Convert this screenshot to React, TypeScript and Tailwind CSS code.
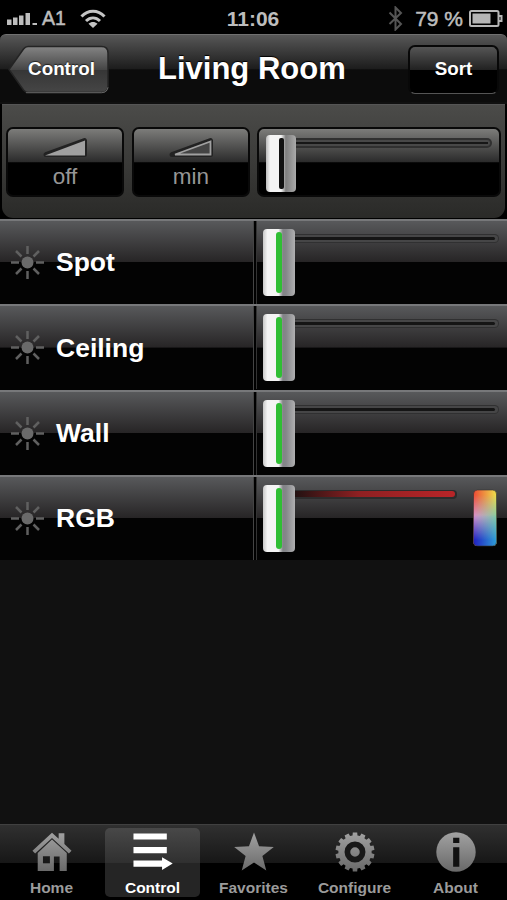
import { useState } from "react";
import clsx from "clsx";

const lights = [
    { name: "Spot", rgb: false },
    { name: "Ceiling", rgb: false },
    { name: "Wall", rgb: false },
    { name: "RGB", rgb: true },
];

// 14 teeth, each one a small trapezoid on the rim
const gearPath = () => {
    const teeth = 14;
    const step = (Math.PI * 2) / teeth;
    const points: string[] = [];
    const add = (r: number, a: number) => points.push(`${(21 + r * Math.cos(a)).toFixed(2)} ${(21 + r * Math.sin(a)).toFixed(2)}`);
    for (let i = 0; i < teeth; i++) {
        const a = i * step - Math.PI / 2;
        add(17.5, a - step * 0.33);
        add(20.6, a - step * 0.25);
        add(20.6, a + step * 0.25);
        add(17.5, a + step * 0.33);
    }
    return `M${points.join("L")}Z`;
};

function IconGradient({ id }: { id: string }) {
    return (
        <linearGradient id={id} x1="0" y1="0" x2="0" y2="42" gradientUnits="userSpaceOnUse">
            <stop offset="0" stopColor="#a2a2a2" />
            <stop offset="1" stopColor="#686868" />
        </linearGradient>
    );
}

function HomeIcon() {
    return (
        <svg width="42" height="42" viewBox="0 0 42 42">
            <defs><IconGradient id="home" /></defs>
            <path fill="url(#home)" d="M21 .8 28 7.2V1.2h6v11.5l7.5 7-2.8 3L21 6.3 3.3 22.7.5 19.7Z" />
            <path fill="url(#home)" fillRule="evenodd" d="M21 8 36.5 22v19H29V25.8h-6V41H6V22ZM11.5 25.5v7.3h7.3v-7.3Z" />
        </svg>
    );
}

function ControlIcon() {
    return (
        <svg width="42" height="42" viewBox="0 0 42 42" fill="#fff">
            <path d="M.5 1.500h35V8h-35ZM.5 15.700h35v6.500h-35ZM.5 30h30v-3.500l11.200 6.700-11.200 6.800v-3.500H.5Z" />
        </svg>
    );
}

function StarIcon() {
    return (
        <svg width="42" height="42" viewBox="0 0 42 42">
            <defs><IconGradient id="star" /></defs>
            <path fill="url(#star)" d="m21 .5 5.300 14.500 15.500.7-12 9.600 4.100 15.200L21 32 8.100 40.500l4.100-15.200-12-9.600 15.500-.7Z" />
        </svg>
    );
}

function GearIcon() {
    return (
        <svg width="42" height="42" viewBox="0 0 42 42">
            <defs><IconGradient id="gear" /></defs>
            <path fill="url(#gear)" d={gearPath()} />
            <circle cx="21" cy="21" r="8" fill="none" stroke="#181818" strokeWidth="6" />
        </svg>
    );
}

function InfoIcon() {
    return (
        <svg width="42" height="42" viewBox="0 0 42 42">
            <defs><IconGradient id="info" /></defs>
            <circle cx="21" cy="21" r="20.700" fill="url(#info)" />
            <path fill="#111" d="M18 6h6.500v5.500H18ZM18 16h6.500v20.500H18Z" />
        </svg>
    );
}

const tabs = [
    { label: "Home", icon: HomeIcon },
    { label: "Control", icon: ControlIcon },
    { label: "Favorites", icon: StarIcon },
    { label: "Configure", icon: GearIcon },
    { label: "About", icon: InfoIcon },
];

function StatusBar() {
    return (
        <div className="grid h-[34px] shrink-0 grid-cols-3 items-center bg-black pt-[3px] text-[20px] font-bold leading-none text-[#bdbdbd]">
            <div className="flex items-center pl-[7px]">
                <svg width="30" height="15" viewBox="0 0 30 15" fill="#bdbdbd">
                    <path d="M0 8.500h4.500V14H0ZM6 6.500h4.500V14H6ZM12 4.500h4.500V14H12ZM18.500 2H23v12h-4.500ZM25.500 12H30v2h-4.500Z" />
                </svg>
                <span className="ml-[5px] text-[19.500px] font-normal [-webkit-text-stroke:0.5px_#bdbdbd]">A1</span>
                <svg className="ml-[14px]" width="26" height="20" viewBox="0 0 26 20" fill="none" stroke="#c4c4c4" strokeWidth="3">
                    <path d="M1.500 7.500C8 .6 18 .6 24.500 7.500M6 12c4.300-4 9.700-4 14 0" />
                    <path fill="#c4c4c4" stroke="none" d="m13 19-4.500-4.300c2.700-2.400 6.300-2.400 9 0Z" />
                </svg>
            </div>
            <span className="-ml-px text-center text-[21px]">11:06</span>
            <div className="flex items-center justify-end pr-[4px]">
                <svg className="mr-[11px]" width="16" height="25" viewBox="0 0 16 25" fill="none" stroke="#555" strokeWidth="2">
                    <path d="M1.500 6.500 13 18l-5.500 5.500V1.500L13 7 1.500 18" />
                </svg>
                <span className="text-[21px] font-normal [-webkit-text-stroke:0.5px_#bdbdbd]">79 %</span>
                <svg className="ml-[6px]" width="34" height="17" viewBox="0 0 34 17">
                    <rect x="1" y="1" width="28.500" height="15" rx="1.500" fill="none" stroke="#b5b5b5" strokeWidth="2" />
                    <path fill="#b5b5b5" d="M3.500 3.500h18v10h-18Z" />
                    <path fill="none" stroke="#b5b5b5" strokeWidth="2" d="M30 6h2.500v5H30" />
                </svg>
            </div>
        </div>
    );
}

function Header() {
    return (
        <header className="flex h-[70px] shrink-0 items-start rounded-t-[6px] border-t border-[#707070] border-b-2 border-b-[#101010] bg-[linear-gradient(to_bottom,#575757_0%,#1d1d1d_50%,#0c0c0c_52%,#0c0c0c_100%)] pt-[10px] pr-[8px] pl-[8px]">
            <button className="relative h-[50px] w-[101px] pl-[2px] text-[18.800px] font-bold text-white">
                <svg className="absolute inset-0" width="101" height="50" viewBox="0 0 101 50">
                    <defs>
                        <linearGradient id="back" x1="0" y1="0" x2="0" y2="1">
                            <stop offset="0" stopColor="#848484" />
                            <stop offset=".5" stopColor="#464646" />
                            <stop offset=".52" stopColor="#363636" />
                            <stop offset="1" stopColor="#464646" />
                        </linearGradient>
                    </defs>
                    <path fill="url(#back)" stroke="#242424" strokeWidth="1.500" d="M20 1.500h73.500q6.500 0 6.500 6.500v33q0 6.500-6.500 6.500H20q-2.500 0-4.500-2.500L1 24.500 15.500 4q2-2.500 4.500-2.500Z" />
                    <path fill="none" stroke="#666" d="M18 47.700h75.500q5.500 0 6.500-5.500" />
                </svg>
                <span className="relative -top-px left-[2px] [text-shadow:0_-1px_1px_#222]">Control</span>
            </button>
            <h1 className="mt-[4px] flex-1 pl-[49px] text-[31px] font-bold leading-[40px] whitespace-nowrap text-white [text-shadow:0_-1px_1px_#000]">Living Room</h1>
            <button className="h-[49px] w-[91px] rounded-[7px] border-2 border-b border-[#080808] border-b-[#555] bg-[linear-gradient(to_bottom,#555_0%,#222_49%,#000_50%,#000_100%)] pb-[2px] text-[18.800px] font-bold text-white">
                Sort
            </button>
        </header>
    );
}

function RampIcon({ filled }: { filled: boolean }) {
    return (
        <svg width="48" height="22" viewBox="0 0 48 22" strokeLinejoin="round">
            <path d="M5 17.500 43.500 3.500v14Z" fill="#222" stroke="#222" strokeWidth="5" />
            {filled ? (
                <path d="M4 18.500 44 3.500v15Z" fill="#a0a0a0" />
            ) : (
                <path d="M8 17.500 43.500 4.500v13Z" fill="#444" stroke="#a0a0a0" strokeWidth="1.800" strokeLinejoin="miter" />
            )}
        </svg>
    );
}

function PresetButton({ label, filled }: { label: string; filled: boolean }) {
    return (
        <button className="flex h-[70px] w-[118px] flex-col items-center rounded-[7px] border-2 border-[#090909] bg-[linear-gradient(to_bottom,#7c7c7a_0%,#2b2b2b_50%,#000_51%,#000_100%)] pt-[8px] text-[22.500px] leading-[36px] text-[#969696]">
            <RampIcon filled={filled} />
            <span>{label}</span>
        </button>
    );
}

function ColorSwatch() {
    return (
        <svg className="mt-[4px] ml-[16px] shrink-0" width="24" height="58" viewBox="0 0 24 58">
            <defs>
                <linearGradient id="warm" x1="0" y1="0" x2="1" y2="0">
                    <stop offset="0" stopColor="#ee4a35" />
                    <stop offset="1" stopColor="#eee04c" />
                </linearGradient>
                <linearGradient id="cool" x1="0" y1="0" x2="1" y2="0">
                    <stop offset="0" stopColor="#2220c2" />
                    <stop offset="1" stopColor="#2d9fd8" />
                </linearGradient>
                <linearGradient id="middle" x1="0" y1="0" x2="1" y2="0">
                    <stop offset="0" stopColor="#d994cf" />
                    <stop offset="1" stopColor="#83cda5" />
                </linearGradient>
                <linearGradient id="fadeDown" x1="0" y1="0" x2="0" y2="1">
                    <stop offset=".45" stopColor="#000" />
                    <stop offset=".88" stopColor="#fff" />
                </linearGradient>
                <linearGradient id="fadeMiddle" x1="0" y1="0" x2="0" y2="1">
                    <stop offset=".1" stopColor="#000" />
                    <stop offset=".48" stopColor="#fff" />
                </linearGradient>
                <mask id="coolMask"><rect width="24" height="58" fill="url(#fadeDown)" /></mask>
                <mask id="middleMask"><rect width="24" height="58" fill="url(#fadeMiddle)" /></mask>
            </defs>
            <rect x=".5" y="1" width="23" height="56" rx="4" fill="url(#warm)" />
            <rect x=".5" y="1" width="23" height="56" rx="4" fill="url(#middle)" mask="url(#middleMask)" />
            <rect x=".5" y="1" width="23" height="56" rx="4" fill="url(#cool)" mask="url(#coolMask)" />
            <rect x=".5" y="1" width="23" height="56" rx="4" fill="none" stroke="#333" strokeOpacity=".6" />
        </svg>
    );
}

function LightRow({ name, rgb }: { name: string; rgb: boolean }) {
    return (
        <div className="flex flex-1 border-t-2 border-[#77787a] bg-[linear-gradient(to_bottom,#58595b_0%,#272526_49%,#030303_50%,#030303_100%)]">
            <div className="flex w-[254px] items-center border-r border-[#444] pl-[11px]">
                <svg width="33" height="33" viewBox="0 0 33 33" stroke="#606060" strokeWidth="2.500">
                    <circle cx="16.500" cy="16.500" r="6" fill="#6a6a6a" stroke="none" />
                    <path d="M16.500 0v8M16.500 25v8M0 16.500h8M25 16.500h8M5 5l5.500 5.500M22.500 22.500 28 28M28 5l-5.500 5.500M10.500 22.500 5 28" />
                </svg>
                <span className="ml-[12px] text-[26.500px] font-bold leading-none text-white">{name}</span>
            </div>
            <div className="flex flex-1 items-start border-l-2 border-black pt-[8px]">
                <div className="-mt-[8px] h-[83px] w-px bg-[#333]" />
                <div className="ml-[6px] flex h-[67px] w-[32px] shrink-0 justify-center rounded-[4px] bg-[linear-gradient(to_right,#c8c8c8_0%,#f4f4f4_14%,#f4f4f4_48%,#828387_62%,#85868a_72%,#b0b0b1_100%)] py-[3px]">
                    <div className="w-[6px] rounded-full bg-[#2fbe34]" />
                </div>
                {rgb ? (
                    <>
                        <div className="mt-[5px] flex h-[9px] w-[162px] items-center rounded-r-[4px] bg-[#2c2c2c] pr-[2px]">
                            <div className="h-[6px] w-full rounded-r-[3px] bg-[linear-gradient(to_right,#211_0%,#8f2022_40%,#b92528_100%)]" />
                        </div>
                        <ColorSwatch />
                    </>
                ) : (
                    <div className="mt-[5px] mr-[8px] flex h-[9px] flex-1 items-center rounded-r-full border border-l-0 border-[#303031] bg-[#464647] pr-[3px]">
                        <div className="h-[3px] w-full rounded-r-full bg-[#151515]" />
                    </div>
                )}
            </div>
        </div>
    );
}

export default function App() {
    const [activeTab, setActiveTab] = useState("Control");

    return (
        <div className="flex h-[900px] w-[507px] flex-col overflow-hidden bg-black font-['Liberation_Sans',Arial,sans-serif]">
            <StatusBar />
            <Header />

            {/* Room presets and master dimmer */}
            <div className="h-[115px] shrink-0 bg-black px-[2px] pb-px">
                <div className="flex h-full rounded-b-[11px] border-t border-[#555] bg-[linear-gradient(to_bottom,#4b4b49,#2a2a28)] pt-[22px] pl-[4px]">
                    <PresetButton label="off" filled />
                    <div className="w-[8px]" />
                    <PresetButton label="min" filled={false} />
                    <div className="ml-[7px] flex h-[70px] w-[244px] items-start rounded-[7px] border-2 border-[#090909] bg-[linear-gradient(to_bottom,#7c7c7a_0%,#2b2b2b_50%,#000_51%,#000_100%)] pt-[6px] pl-[7px]">
                        <div className="flex h-[57px] w-[30px] justify-center rounded-[4px] bg-[linear-gradient(to_right,#bbb_0%,#f4f4f4_14%,#f4f4f4_50%,#7e7e7e_66%,#aaa_100%)] py-[3px]">
                            <div className="w-[5px] rounded-[2px] bg-[#111]" />
                        </div>
                        <div className="mt-[3px] mr-[7px] flex h-[10px] flex-1 items-center rounded-r-full border-2 border-l-0 border-[#303030] bg-[#484848] pr-[2px]">
                            <div className="h-[2px] w-full bg-[#171717]" />
                        </div>
                    </div>
                </div>
            </div>

            {/* Lights */}
            <div className="flex h-[341px] shrink-0 flex-col">
                {lights.map((light) => (
                    <LightRow key={light.name} {...light} />
                ))}
            </div>

            <div className="flex-1 bg-[#111]" />

            {/* Tab bar */}
            <nav className="grid h-[76px] shrink-0 grid-cols-5 border-t border-[#404040] bg-[linear-gradient(to_bottom,#303030_0%,#171717_50%,#000_51%,#000_100%)] px-px pt-[3px]">
                {tabs.map(({ label, icon: Icon }) => (
                    <button
                        key={label}
                        onClick={() => setActiveTab(label)}
                        className={clsx(
                            "mx-auto flex h-[69px] w-[95px] flex-col items-center rounded-[5px] pt-[4px] text-[15.500px] font-bold leading-[18px]",
                            activeTab === label ? "bg-[linear-gradient(to_bottom,#484848_0%,#303030_50%,#252525_51%,#252525_100%)] text-white" : "text-[#9b9b9b]"
                        )}
                    >
                        <Icon />
                        <span className="mt-[7px]">{label}</span>
                    </button>
                ))}
            </nav>
        </div>
    );
}
